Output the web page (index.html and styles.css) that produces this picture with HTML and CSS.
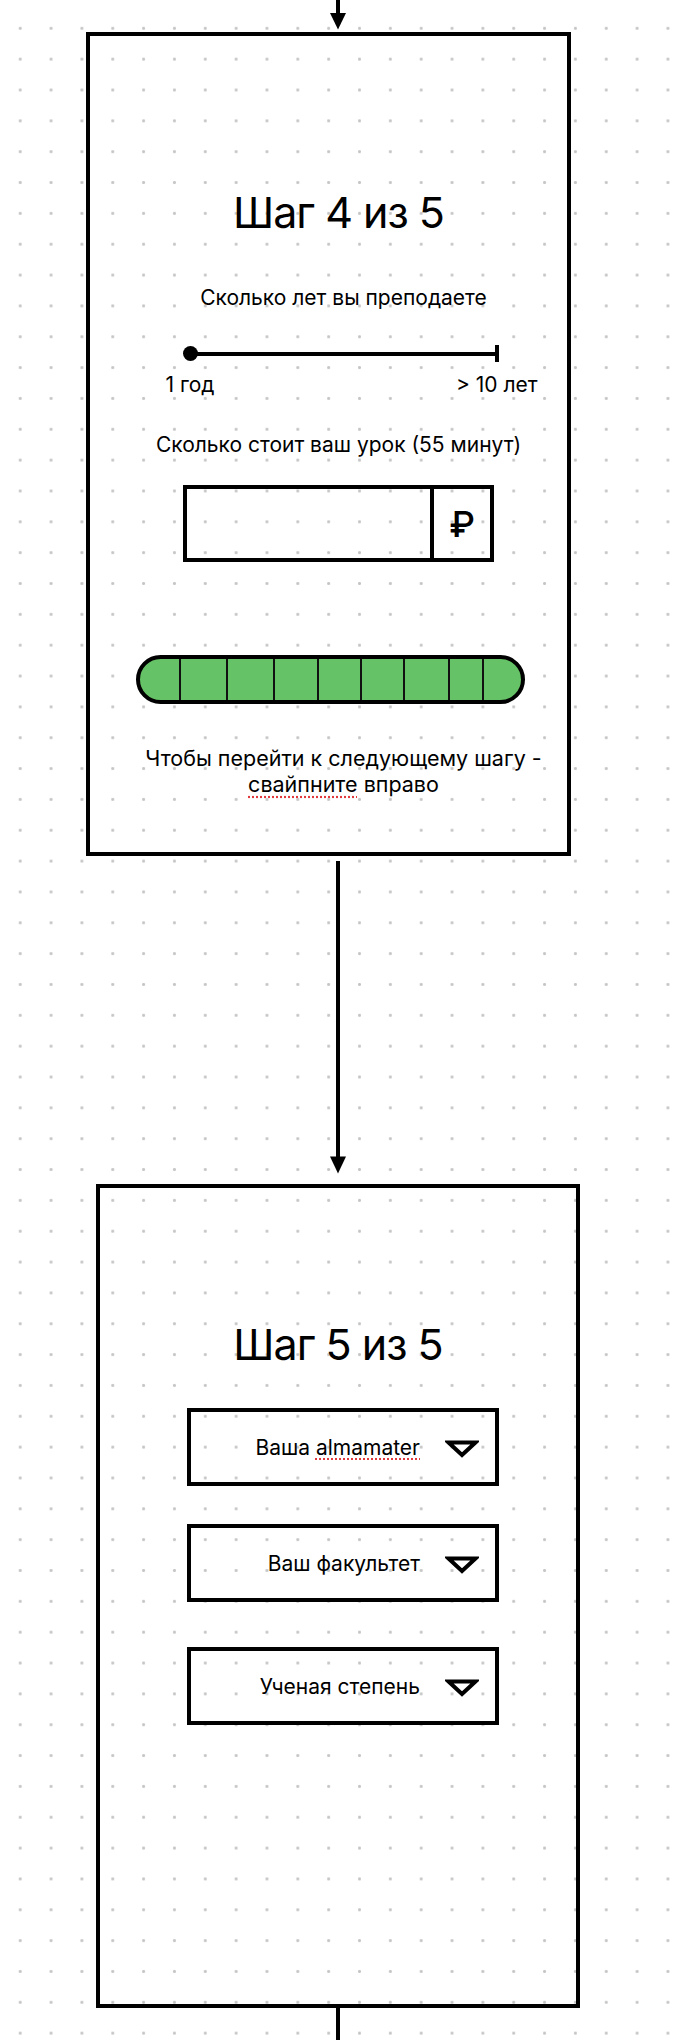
FILE: index.html
```html
<!DOCTYPE html>
<html>
<head>
  <title>Регистрация преподавателя - шаги 4 и 5</title>
  <link rel="stylesheet" href="styles.css">
</head>
<body>
  <div class="canvas">
    <svg class="arrow arrow-top" width="20" height="32" viewBox="0 0 20 32">
      <line x1="10" y1="0" x2="10" y2="16" stroke="#000" stroke-width="4"/>
      <polygon points="2,13 18,13 10,29.5" fill="#000"/>
    </svg>

    <section class="screen screen-step4">
      <h1 class="step-title">Шаг 4 из 5</h1>
      <p class="question">Сколько лет вы преподаете</p>

      <div class="slider">
        <div class="slider-track">
          <span class="slider-knob"></span>
          <span class="slider-line"></span>
          <span class="slider-end"></span>
        </div>
        <div class="slider-labels">
          <span>1 год</span>
          <span>&gt; 10 лет</span>
        </div>
      </div>

      <p class="question question-price">Сколько стоит ваш урок (55 минут)</p>
      <div class="price-input">
        <div class="price-field"></div>
        <div class="price-currency">₽</div>
      </div>

      <div class="progress">
        <span></span><span></span><span></span>
        <span></span><span></span><span></span>
        <span></span><span></span><span></span>
      </div>

      <p class="hint">Чтобы перейти к следующему шагу -<br><span class="spell">свайпните</span> вправо</p>
    </section>

    <svg class="arrow arrow-mid" width="20" height="328" viewBox="0 0 20 328">
      <line x1="10" y1="5" x2="10" y2="304" stroke="#000" stroke-width="4"/>
      <polygon points="2,300.5 18,300.5 10,317.5" fill="#000"/>
    </svg>

    <section class="screen screen-step5">
      <h1 class="step-title">Шаг 5 из 5</h1>

      <div class="select">
        <span>Ваша <span class="spell">almamater</span></span>
        <svg class="select-caret" width="34" height="18" viewBox="0 0 34 18">
          <polygon points="3.5,2.5 30.5,2.5 17,15" fill="none" stroke="#000" stroke-width="4"/>
        </svg>
      </div>
      <div class="select select-2">
        <span>Ваш факультет</span>
        <svg class="select-caret" width="34" height="18" viewBox="0 0 34 18">
          <polygon points="3.5,2.5 30.5,2.5 17,15" fill="none" stroke="#000" stroke-width="4"/>
        </svg>
      </div>
      <div class="select select-3">
        <span>Ученая степень</span>
        <svg class="select-caret" width="34" height="18" viewBox="0 0 34 18">
          <polygon points="3.5,2.5 30.5,2.5 17,15" fill="none" stroke="#000" stroke-width="4"/>
        </svg>
      </div>
    </section>

    <div class="arrow-tail"></div>
  </div>
</body>
</html>
```

FILE: styles.css
```css
body {
  margin: 0;
  padding: 0;
  font-family: Inter, "Noto Sans", sans-serif;
  color: #000;
  background-color: #fff;
  background-image: radial-gradient(circle, #c6c6c6 0, #c6c6c6 1.2px, transparent 1.8px);
  background-size: 30.85px 30.85px;
  background-position: 4.8px 12.9px;
  min-height: 2040px;
}

.canvas {
  display: flex;
  flex-direction: column;
  align-items: flex-start;
  width: 673px;
}

.arrow {
  display: block;
  margin-left: 328px;
}

.arrow-tail {
  width: 4px;
  height: 36px;
  margin-left: 336px;
  margin-top: -4px;
  background: #000;
}

.screen {
  box-sizing: border-box;
  width: 485px;
  height: 824px;
  border: 4px solid #000;
  display: flex;
  flex-direction: column;
  align-items: center;
}

.screen-step4 {
  margin-left: 86px;
  padding-left: 20px;
}

.screen-step5 {
  margin-left: 96px;
  width: 484px;
}

.step-title {
  margin: 0;
  font-size: 43px;
  line-height: 52px;
  font-weight: 400;
  letter-spacing: -1px;
}

.screen-step4 .step-title {
  margin-top: 150px;
}

.screen-step5 .step-title {
  margin-top: 130px;
}

.question {
  margin: 48px 0 0 10px;
  font-size: 21px;
  line-height: 24px;
}

.question-price {
  margin: 36px 0 0 0;
}

/* slider */
.slider {
  width: 372px;
  margin: 35px 0 0 26px;
}

.slider-track {
  display: flex;
  align-items: center;
  height: 17px;
  padding: 0 39px 0 17px;
}

.slider-knob {
  width: 15px;
  height: 15px;
  border-radius: 50%;
  background: #000;
  flex: none;
}

.slider-line {
  flex: 1;
  height: 4px;
  margin-left: -4px;
  background: #000;
}

.slider-end {
  width: 4px;
  height: 17px;
  background: #000;
  flex: none;
}

.slider-labels {
  display: flex;
  justify-content: space-between;
  margin-top: 11px;
  font-size: 21px;
  line-height: 24px;
}

/* price */
.price-input {
  display: flex;
  box-sizing: border-box;
  width: 311px;
  height: 77px;
  margin-top: 28px;
  border: 4px solid #000;
}

.price-field {
  width: 243px;
  border-right: 4px solid #000;
}

.price-currency {
  flex: 1;
  display: flex;
  align-items: center;
  justify-content: center;
  font-size: 36px;
  font-weight: 500;
}

/* progress */
.progress {
  display: grid;
  grid-template-columns: 39px 47px 47px 44px 43px 43px 45px 34px 1fr;
  box-sizing: border-box;
  width: 389px;
  height: 49px;
  margin: 93px 16px 0 0;
  border: 4px solid #000;
  border-radius: 25px;
  background: #66c266;
  overflow: hidden;
}

.progress span + span {
  border-left: 2.5px solid #111;
}

.hint {
  margin: 41px 0 0 10px;
  font-size: 21.5px;
  line-height: 26px;
  text-align: center;
}

.spell {
  text-decoration: underline dotted #e0393e;
  text-underline-offset: 4px;
}

/* selects */
.select {
  box-sizing: border-box;
  width: 312px;
  height: 78px;
  margin: 38px 0 0 10px;
  border: 4px solid #000;
  display: flex;
  align-items: center;
  justify-content: flex-end;
  gap: 25px;
  padding-right: 16px;
  font-size: 21px;
}

.select-3 {
  margin-top: 45px;
}

.select-caret {
  margin-top: 4px;
}
```
